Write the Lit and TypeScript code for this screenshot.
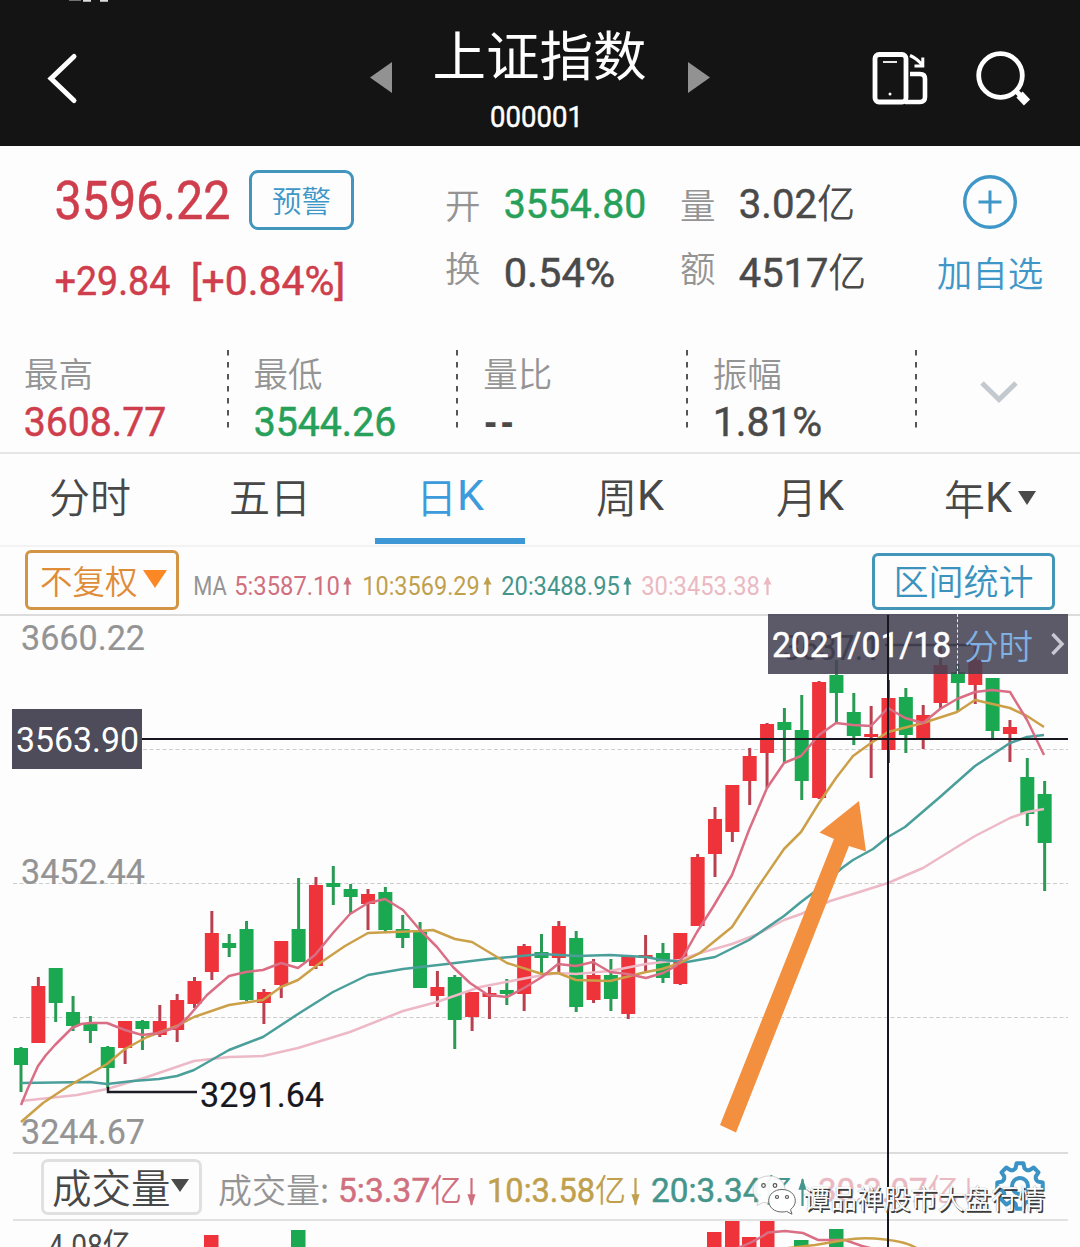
import { LitElement, html, svg, css } from "lit";
import { customElement } from "lit/decorators.js";

const RED = "#ee333b";
const GREEN = "#1aa850";

/** Numerals squeezed to a given ink width; the box is exactly the cap height. */
const num = (text: string, width: number, cap: number, cls = "") => {
  const size = cap / 0.711;
  const bearing = size * 0.03;
  const hasUnit = text.endsWith("亿");
  const digits = hasUnit ? text.slice(0, -1) : text;
  return html`<svg class="num ${cls}" width=${width} height=${cap}>
    <text x=${-bearing} y=${cap} font-size=${size} textLength=${width + bearing * 2} lengthAdjust="spacingAndGlyphs">${digits}${hasUnit ? svg`<tspan class="unit" font-size=${size * 0.95}>亿</tspan>` : ""}</text>
  </svg>`;
};

/** Placeholder for a figure that has no value yet: two separate dashes. */
const blank = () => html`<span class="blank ink">--</span>`;

/** Thin trend arrow that follows a moving-average figure. */
const trend = (up: boolean, h: number) => html`<svg class="trend" width="9" height=${h} viewBox="0 0 9 24" preserveAspectRatio="none">
  <g transform=${up ? "" : "rotate(180 4.5 12)"}>
    <path d="M4.5 1v23" stroke="currentColor" stroke-width="2.2" />
    <path d="M4.5 0 8.6 10H.4z" fill="currentColor" />
  </g>
</svg>`;

type Candle = [up: 0 | 1, high: number, top: number, bottom: number, low: number];

const CANDLES: Candle[] = [
  [0, 1047, 1048, 1065, 1092], [1, 977, 986, 1043, 1043], [0, 968, 968, 1003, 1022], [0, 996, 1012, 1026, 1031],
  [0, 1016, 1023, 1031, 1043], [0, 1046, 1047, 1068, 1088], [1, 1021, 1021, 1048, 1064], [0, 1020, 1021, 1029, 1050],
  [1, 1005, 1021, 1035, 1037], [1, 994, 1000, 1030, 1042], [1, 977, 981, 1004, 1008], [1, 911, 933, 972, 980],
  [0, 934, 943, 948, 957], [0, 921, 929, 1000, 1001], [1, 989, 992, 1003, 1024], [1, 941, 941, 985, 998],
  [0, 878, 929, 962, 962], [1, 877, 885, 966, 969], [0, 866, 883, 887, 905], [0, 884, 889, 897, 914],
  [1, 889, 894, 904, 930], [0, 887, 892, 930, 932], [0, 915, 929, 938, 948], [0, 922, 932, 988, 988],
  [1, 971, 987, 996, 1007], [0, 975, 977, 1020, 1049], [1, 992, 992, 1017, 1031], [1, 987, 993, 997, 1019],
  [0, 979, 990, 994, 1005], [1, 944, 946, 994, 1011], [0, 934, 952, 958, 975], [1, 921, 926, 958, 972],
  [0, 931, 938, 1007, 1012], [1, 959, 975, 1000, 1003], [0, 959, 975, 999, 1011], [1, 956, 956, 1014, 1019],
  [1, 935, 955, 958, 973], [0, 943, 953, 978, 983], [1, 933, 933, 984, 985], [1, 854, 857, 926, 926],
  [1, 807, 819, 854, 877], [1, 785, 785, 832, 842], [1, 748, 756, 781, 805], [1, 723, 724, 753, 788],
  [0, 708, 722, 730, 762], [0, 695, 730, 781, 800], [1, 681, 682, 798, 799], [0, 660, 675, 693, 723],
  [0, 693, 712, 736, 745], [1, 706, 734, 737, 778], [1, 680, 698, 750, 763], [0, 688, 697, 735, 753],
  [1, 705, 715, 739, 749], [1, 647, 665, 703, 708], [0, 664, 672, 683, 712], [1, 646, 660, 685, 704],
  [0, 678, 678, 731, 738], [1, 720, 727, 734, 762], [0, 758, 777, 814, 826], [0, 781, 794, 843, 891],
];

const MA5 = "21,1105 28,1088 38,1066 46,1055 55,1045 72,1028 81,1024 90,1023 107,1023 125,1030 142,1035 159,1033 177,1027 188,1017 207,995 229,976 246,972 263,970 281,963 298,968 315,955 333,933 350,914 368,903 385,899 403,910 420,930 437,947 453,967 470,983 488,995 507,997 524,988 542,977 558,964 576,966 593,962 610,972 628,974 646,978 663,973 676,966 683,957 697,932 713,907 732,875 749,830 767,788 784,763 801,756 819,735 836,723 853,725 871,726 888,708 905,718 923,723 940,709 957,699 975,692 992,690 1010,692 1027,720 1044,755";
const MA10 = "21,1122 43,1103 67,1087 107,1064 125,1049 147,1037 177,1026 194,1017 229,1005 263,1000 281,987 298,980 320,963 345,946 368,933 420,931 433,930 455,939 472,942 507,963 542,974 558,973 576,980 610,981 646,972 662,969 680,963 700,953 732,927 758,887 784,849 801,832 819,803 836,778 853,756 871,743 888,732 923,723 957,712 975,700 1010,708 1027,716 1044,727";
const MA20 = "21,1083 90,1082 107,1084 133,1081 159,1079 177,1076 194,1070 229,1050 263,1037 298,1014 333,992 368,975 403,969 447,964 488,959 542,954 577,956 610,955 646,957 662,960 687,962 715,957 749,940 784,916 801,902 813,893 842,868 853,860 873,849 888,837 905,827 940,797 975,766 1010,743 1027,737 1044,735";
const MA30 = "21,1101 77,1095 107,1089 147,1077 194,1061 229,1057 263,1056 298,1048 350,1032 403,1011 437,1002 480,987 532,977 558,973 576,974 610,971 646,964 680,960 700,953 732,944 758,934 784,920 801,914 830,901 853,894 888,883 923,868 957,847 975,836 1010,818 1027,812 1044,809";

const VOLUME: [x: number, top: number, color: string][] = [
  [204, 1235, RED], [291, 1230, GREEN], [707, 1232, RED], [725, 1221, RED],
  [742, 1237, RED], [760, 1221, RED], [794, 1240, GREEN], [829, 1229, GREEN],
];

const STATS = [
  { label: "最高", value: "3608.77", width: 140, cls: "up" },
  { label: "最低", value: "3544.26", width: 140, cls: "down" },
  { label: "量比", value: "", width: 30, cls: "ink" },
  { label: "振幅", value: "1.81%", width: 107, cls: "ink" },
];

const TABS: [cjk: string, latin: string][] = [["分时", ""], ["五日", ""], ["日", "K"], ["周", "K"], ["月", "K"]];

/** Eight-toothed outline centred on the origin. */
const gearPath = () => {
  const teeth = 8;
  const step = (2 * Math.PI) / teeth;
  const at = (r: number, a: number) => `${(r * Math.cos(a)).toFixed(2)} ${(r * Math.sin(a)).toFixed(2)}`;
  let d = "";
  for (let i = 0; i < teeth; i++) {
    const a = i * step - Math.PI / 2;
    d += `${i ? "L" : "M"}${at(18.5, a - 0.24)}L${at(23, a - 0.15)}L${at(23, a + 0.15)}L${at(18.5, a + 0.24)}`;
    d += `Q${at(16.5, a + step / 2)} ${at(18.5, a + step - 0.24)}`;
  }
  return d + "Z";
};

@customElement("app-root")
export class AppRoot extends LitElement {
  static styles = css`
    :host {
      display: block;
      width: 1080px;
      height: 1247px;
      overflow: hidden;
      position: relative;
      background: #fdfdfd;
      color: #484848;
      font-family: Roboto, "Noto Sans CJK SC", sans-serif;
      font-weight: 400;
      line-height: 1;
    }
    * { box-sizing: border-box; }
    svg { display: block; flex: none; overflow: visible; }
    .num text { fill: currentColor; stroke: currentColor; stroke-width: 0.5px; font-family: Roboto, "Noto Sans CJK SC", sans-serif; }
    .num.thin text { stroke: none; }
    .num .unit { font-family: "Noto Sans CJK SC", sans-serif; font-weight: 350; stroke: none; }
    .cjk { font-family: "Noto Sans CJK SC", sans-serif; font-weight: 350; white-space: nowrap; display: block; }
    .up { color: #cf3e4c; }
    .down { color: #27a05a; }
    .ink { color: #4a4a4a; }
    .muted { color: #949494; }
    .blue { color: #3f97c8; }

    header { height: 146px; background: #141414; color: #fff; display: flex; align-items: flex-start; overflow: hidden; }
    .back { margin: 53px 0 0 47px; }
    .prev { margin: 62px 0 0 293px; }
    .heading { width: 296px; padding-top: 26px; display: flex; flex-direction: column; align-items: center; }
    .heading .cjk { font-size: 53.5px; font-weight: 400; margin-right: 1px; }
    .heading .num { margin: 25.5px 8px 0 0; }
    .next { margin-top: 62px; }
    .rotate { margin: 51px 0 0 162px; }
    .search { margin: 50px 0 0 47px; }

    .quote { height: 204px; display: flex; }
    .price { width: 445px; padding: 24px 0 0 56px; }
    .price-row { height: 60px; display: flex; align-items: center; gap: 20px; }
    .alert { width: 105px; height: 60px; border: 3px solid #4296be; border-radius: 9px; display: grid; place-items: center; font-size: 29.5px; }
    .change { display: flex; gap: 23px; margin-top: 36px; }
    .facts { width: 490px; padding-top: 22px; display: grid; grid-template-columns: 60px 175px 60px 195px; grid-auto-rows: 69px; align-items: center; }
    .facts .cjk { font-size: 35.5px; }
    .facts .low { padding-bottom: 10px; }
    .facts .high { padding-top: 3px; }
    .watch { width: 110px; padding-top: 29px; display: flex; flex-direction: column; align-items: center; }
    .watch .cjk { font-size: 35.5px; margin-top: 25px; }

    .stats { height: 102px; display: flex; margin-left: -1px; }
    .stat { width: 229.6px; padding: 5px 0 0 26px; display: flex; justify-content: space-between; }
    .stat .cjk { font-size: 34.5px; margin: 0 0 17px -1px; }
    .stat .rule { margin-top: -5px; }
    .blank { display: block; font-family: "Liberation Sans", sans-serif; font-size: 38px; font-weight: 700; letter-spacing: 4px; margin-top: -4px; }
    .more { margin: 30px 0 0 63px; }

    .tabs { height: 95px; border-top: 2px solid #e6e6e6; border-bottom: 2px solid #f3f3f3; display: flex; }
    .tab { width: 180px; padding-top: 21px; display: flex; justify-content: center; align-items: flex-start; font-size: 41px; position: relative; }
    .tab .latin { font-size: 43px; line-height: 41px; width: 27px; }
    .tab.active { color: #3d9bdc; }
    .tab.active::after { content: ""; position: absolute; left: 15px; bottom: 1px; width: 150px; height: 6px; background: #3f98d6; }
    .tab.year { padding-top: 23px; }
    .tab.year svg { margin: 14px 0 0 6px; }

    .tools { height: 69px; padding-top: 3px; display: flex; border-bottom: 2px solid #dcdcdc; }
    .adjust { width: 154px; height: 60px; margin-left: 25px; border: 3px solid #d39443; border-radius: 6px; display: flex; align-items: center; padding-left: 12px; color: #df8c38; }
    .adjust .cjk { font-size: 32.5px; }
    .adjust svg { margin: -2px 0 0 5px; }
    .ma { display: flex; padding: 27px 0 0 15px; height: 46px; width: 693px; }
    .ma .pair, .vol .pair { display: flex; justify-content: space-between; }
    .c5 { color: #d0707f; }
    .c10 { color: #c0a04c; }
    .c20 { color: #44958c; }
    .c30 { color: #eab9c2; }
    .range { width: 183px; height: 57px; margin-top: 3px; border: 3px solid #4296b8; border-radius: 6px; display: grid; place-items: center; font-size: 35px; color: #3b93bd; }
    .range .cjk { margin-top: -5px; }

    .plot { height: 536px; }
    .vol { height: 69px; display: flex; border-top: 2px solid #dcdcdc; border-bottom: 2px solid #e2e2e2; margin: 0 12px 0 13px; padding-left: 28px; }
    .select { width: 161px; height: 56px; margin-top: 5px; border: 3px solid #e0e0e0; border-radius: 7px; display: flex; align-items: center; padding-left: 8px; }
    .select .cjk { font-size: 39.5px; margin-top: -2px; }
    .select svg { margin-top: -3px; }
    .vol-name { font-size: 34px; margin: 18px 0 0 16px; width: 121px; }
    .vol .pair { margin-top: 24px; }
    .bars { height: 26px; overflow: hidden; }

    .cross { position: absolute; background: #17171f; }
    .cross.h { left: 142px; top: 738px; width: 926px; height: 2px; }
    .cross.v { left: 887px; top: 615px; width: 2px; height: 632px; }
    .level { position: absolute; left: 12px; top: 709px; width: 130px; height: 60px; background: #4e4b5a; color: #fff; display: grid; place-items: center; }
    .tip { position: absolute; left: 768px; top: 614px; width: 300px; height: 60px; background: rgba(70, 66, 84, 0.88); color: #fff; display: flex; align-items: center; padding-left: 5px; }
    .tip .split { width: 0; height: 60px; border-left: 1.5px dashed #e8e8ee; margin: 0 6px 0 7px; }
    .tip .cjk { color: #7fb0e2; font-size: 34.5px; width: 87px; }
    .gear { position: absolute; left: 994px; top: 1160px; }
    .mark { position: absolute; left: 752px; top: 1175px; display: flex; }
    .mark .cjk { font-size: 26.9px; color: #fff; margin: 10px 0 0 5px; text-shadow: 1.5px 1.5px 0 #3c3c3c, 0 0 1px #777; }
  `;

  private header() {
    return html`<header>
      <svg class="back" width="30" height="52" viewBox="0 0 30 52"><path d="M27 3.500 4 25.500 27 47.500" fill="none" stroke="#fff" stroke-width="5" stroke-linecap="round" /><path d="M22-52.800h12" stroke="#777" stroke-width="1.500" /><path d="M36-52.500h8M53-52.500h8" stroke="#ddd" stroke-width="2.500" /></svg>
      <svg class="prev" width="22" height="31"><path d="M22 0v31L0 15.500z" fill="#929292" /></svg>
      <div class="heading"><span class="cjk">上证指数</span>${num("000001", 91, 21.5)}</div>
      <svg class="next" width="22" height="31"><path d="M0 0v31L22 15.500z" fill="#929292" /></svg>
      <svg class="rotate" width="56" height="54" viewBox="0 0 56 54" fill="none" stroke="#fff">
        <rect x="3" y="3.500" width="31" height="47.500" rx="4" stroke-width="4.800" />
        <path d="M38 23h10q5 0 5 5v18q0 5-5 5H33" stroke-width="4.600" />
        <path d="M11 11h14" stroke-width="1.800" /><circle cx="18" cy="43" r="1.500" fill="#fff" stroke="none" />
        <path d="M38 4.500Q44 7 50 13.500M50.800 6.500V15h-8.300" stroke-width="3" />
      </svg>
      <svg class="search" width="58" height="58" viewBox="0 0 58 58" fill="none" stroke="#fff">
        <circle cx="25.500" cy="25.500" r="21.800" stroke-width="4.800" /><path d="M41 41l4 4" stroke-width="5" /><path d="M44.500 44.500 52 52.500" stroke-width="8.500" />
      </svg>
    </header>`;
  }

  private quote() {
    return html`<section class="quote">
      <div class="price">
        <div class="price-row up">${num("3596.22", 173, 37.5)}<div class="alert blue"><span class="cjk">预警</span></div></div>
        <div class="change up">${num("+29.84", 113, 29)}${num("[+0.84%]", 152, 29)}</div>
      </div>
      <div class="facts">
        <span class="cjk muted high">开</span>${num("3554.80", 140, 29.5, "down")}
        <span class="cjk muted high">量</span>${num("3.02亿", 114, 29.5, "ink")}
        <span class="cjk muted low">换</span>${num("0.54%", 109, 29.5, "ink")}
        <span class="cjk muted low">额</span>${num("4517亿", 125, 29.5, "ink")}
      </div>
      <div class="watch blue">
        <svg width="54" height="54" fill="none" stroke="currentColor"><circle cx="27" cy="27" r="25.300" stroke-width="3.400" /><path d="M15.500 27h23M27 15.500v23" stroke-width="3" /></svg>
        <span class="cjk">加自选</span>
      </div>
    </section>`;
  }

  private stats() {
    return html`<section class="stats">
      ${STATS.map((s) => html`<div class="stat">
        <div><span class="cjk muted">${s.label}</span>${s.value ? num(s.value, s.width, 29, s.cls) : blank()}</div>
        <svg class="rule" width="2" height="80"><path d="M1 0v80" stroke="#555" stroke-width="2" stroke-dasharray="5.500 6.500" /></svg>
      </div>`)}
      <svg class="more" width="38" height="24"><path d="M2 3 19 19.500 36 3" fill="none" stroke="#c2c9cf" stroke-width="5" /></svg>
    </section>`;
  }

  private tabs() {
    return html`<nav class="tabs">
      ${TABS.map(([cjk, latin]) => html`<div class="tab ${cjk === "日" ? "active" : ""}"><span class="cjk">${cjk}</span>${latin ? html`<span class="latin">${latin}</span>` : ""}</div>`)}
      <div class="tab year"><span class="cjk">年</span><span class="latin">K</span><svg width="18" height="14"><path d="M0 0h18L9 14z" fill="#4a4a4a" /></svg></div>
    </nav>`;
  }

  private ma(cls: string, text: string, w: number, box: number) {
    return html`<div class="pair ${cls}" style="width:${w}px;margin-right:${box - w}px">${num(text, w - 13, 18, "thin")}${trend(true, 18)}</div>`;
  }

  private vma(cls: string, text: string, w: number, up: boolean) {
    return html`<div class="pair ${cls}" style="width:${w}px;margin-right:12px">${num(text, w - 15, 24)}${trend(up, 28)}</div>`;
  }

  private tools() {
    return html`<section class="tools">
      <div class="adjust"><span class="cjk">不复权</span><svg width="24" height="18"><path d="M0 0h24L12 18z" fill="#fb8825" /></svg></div>
      <div class="ma">
        <div style="width:41px" class="muted">${num("MA", 32, 18, "thin")}</div>
        ${this.ma("c5", "5:3587.10", 117, 128)}${this.ma("c10", "10:3569.29", 129, 139)}
        ${this.ma("c20", "20:3488.95", 130, 140)}${this.ma("c30", "30:3453.38", 130, 130)}
      </div>
      <div class="range"><span class="cjk">区间统计</span></div>
    </section>`;
  }

  private label(text: string, x: number, base: number, fill: string, w = 122) {
    return svg`<text x=${x} y=${base} font-size="34.500" fill=${fill} stroke=${fill} stroke-width="0.2" textLength=${w} lengthAdjust="spacingAndGlyphs">${text}</text>`;
  }

  private plot() {
    return html`<svg class="plot" width="1080" height="536" viewBox="0 616 1080 536">
      ${[749.5, 883.5, 1017.5].map((y) => svg`<path d="M13 ${y}H1068" stroke="#cdcdcd" stroke-dasharray="4 2.500" />`)}
      ${this.label("3660.22", 21, 650, "#949494", 124)}
      ${this.label("3452.44", 21, 884, "#949494", 124)}
      ${this.label("3244.67", 21, 1144, "#949494", 124)}
      ${CANDLES.map(([up, high, top, bottom, low], i) => {
        const x = 21 + i * 17.35;
        return svg`<path d="M${x} ${high}V${low}" stroke=${up ? "#b8404f" : "#2a9a54"} stroke-width="3" /><rect x=${x - 7} y=${top} width="14" height=${bottom - top} fill=${up ? RED : GREEN} />`;
      })}
      <g fill="none" stroke-width="2.500" stroke-linejoin="round">
        <polyline points=${MA30} stroke="#edb9c7" />
        <polyline points=${MA20} stroke="#4a9f9b" />
        <polyline points=${MA10} stroke="#cba048" />
        <polyline points=${MA5} stroke="#d96e84" />
      </g>
      <path d="M108 1087v5h89" fill="none" stroke="#1c1c26" stroke-width="2.500" />
      ${this.label("3291.64", 200, 1107, "#17171f", 124)}
      ${this.label("3637.1", 783, 660, "#17171f", 98)}
      <path d="M885 645h87" stroke="#17171f" stroke-width="2.500" />
      <path d="M859 801 819.500 832.500 834 839 720 1125 736 1132.500 849 846 866 851.500z" fill="#f2903f" />
    </svg>`;
  }

  private volume() {
    return html`<section class="vol">
        <div class="select"><span class="cjk">成交量</span><svg width="18" height="13"><path d="M0 0h18L9 13z" fill="#4a4a4a" /></svg></div>
        <span class="cjk muted vol-name">成交量:</span>
        ${this.vma("c5", "5:3.37亿", 137, false)}${this.vma("c10", "10:3.58亿", 152, false)}
        ${this.vma("c20", "20:3.34亿", 155, true)}${this.vma("c30", "30:3.07亿", 154, false)}
      </section>
      <svg class="bars" width="1080" height="26" viewBox="0 1221 1080 26">
        <text x="48" y="1258" font-size="34" fill="#4a4a4a" textLength="83" lengthAdjust="spacingAndGlyphs">4.08亿</text>
        ${VOLUME.map(([x, top, color]) => svg`<rect x=${x} y=${top} width="14.500" height=${1250 - top} fill=${color} />`)}
        <g fill="none" stroke-width="2.500">
          <path d="M735 1249Q755 1242 768 1232.500L785 1231 803 1233 818 1240 845 1240 862 1246 874 1249" stroke="#d96e84" />
          <path d="M780 1249 815 1245 845 1240Q862 1237 885 1239.500T918 1249" stroke="#cba048" />
        </g>
      </svg>`;
  }

  render() {
    return html`${this.header()}${this.quote()}${this.stats()}${this.tabs()}${this.tools()}${this.plot()}${this.volume()}
      <svg class="gear" width="52" height="52" viewBox="-26 -26 52 52" fill="none" stroke="#3a93c4" stroke-width="4"><path d=${gearPath()} stroke-linejoin="round" /><circle r="8" /></svg>
      <div class="cross h"></div>
      <div class="level">${num("3563.90", 121, 25, "thin")}</div>
      <div class="tip">
        ${num("2021/01/18", 177, 25.5)}<div class="split"></div><span class="cjk">分时</span>
        <svg width="13" height="22"><path d="M1.500 1 11 11 1.500 21" fill="none" stroke="#c9c8d2" stroke-width="3.500" /></svg>
      </div>
      <div class="cross v"></div>
      <div class="mark">
        <svg width="46" height="40" viewBox="0 0 46 40">
          <path d="M17 1C7.500 1 1 7 1 14.500c0 4.500 2.300 8 5.800 10.500L5 30.500l6.500-3.200c2 .5 3.500.7 5.500.7 9.500 0 16-6 16-13.500S26.500 1 17 1z" fill="#fff" fill-opacity=".93" stroke="#bbb" stroke-width=".7" />
          <path d="M30 14.500c-8 0-13.300 5-13.300 11.300S22 37 30 37c1.700 0 3.200-.2 4.600-.6l5.400 2.800-1.500-4.700c3-2.200 4.800-5.200 4.800-8.700 0-6.300-5.300-11.300-13.300-11.300z" fill="#fff" stroke="#666" stroke-width="1" />
          <g fill="#fff" stroke="#555" stroke-width="1.200"><circle cx="11.500" cy="10.500" r="1.800" /><circle cx="23" cy="10.500" r="1.800" /><circle cx="25" cy="22" r="1.500" /><circle cx="35" cy="22" r="1.500" /></g>
        </svg>
        <span class="cjk">谭品禅股市大盘行情</span>
      </div>`;
  }
}
